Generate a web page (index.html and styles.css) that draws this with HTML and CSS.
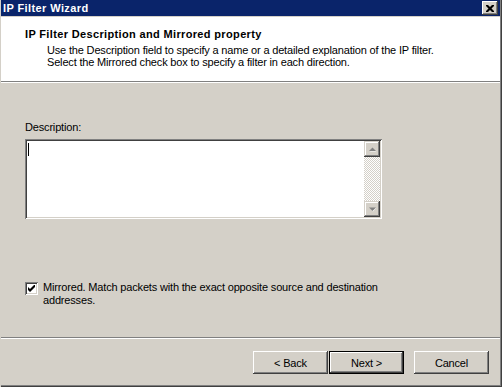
FILE: index.html
```html
<!DOCTYPE html>
<html>
<head>
<meta charset="utf-8">
<link rel="stylesheet" href="styles.css">
</head>
<body>
<div class="window">
  <div class="titlebar">
    <span class="title">IP Filter Wizard</span>
    <div class="close">
      <svg width="8" height="7" viewBox="0 0 8 7"><path d="M0 0h2l2 2 2-2h2v1L5.5 3.5 8 6v1H6L4 5 2 7H0V6l2.5-2.5L0 1z" fill="#000"/></svg>
    </div>
  </div>
  <div class="header">
    <div class="h-title">IP Filter Description and Mirrored property</div>
    <div class="h-desc">Use the Description field to specify a name or a detailed explanation of the IP filter.<br>Select the Mirrored check box to specify a filter in each direction.</div>
  </div>
  <div class="sep"></div>
  <div class="content">
    <div class="label">Description:</div>
    <div class="textarea">
      <div class="text-area-inner"><span class="caret"></span></div>
      <div class="vscroll">
        <div class="sbtn">
          <svg width="7" height="5" viewBox="0 0 7 5"><path d="M1 4.5h6L4 1.5z" fill="#fff"/><path d="M0 4h7L3.5 0.5z" fill="#808080"/></svg>
        </div>
        <div class="track"></div>
        <div class="sbtn">
          <svg width="7" height="5" viewBox="0 0 7 5"><path d="M1 1h6L4 4.5z" fill="#fff"/><path d="M0 0.5h7L3.5 4z" fill="#808080"/></svg>
        </div>
      </div>
    </div>
    <div class="check-row">
      <div class="checkbox">
        <svg width="7" height="7" viewBox="0 0 7 7"><path d="M0 2v3l2 2 5-5V-1L2 4z" fill="#000"/></svg>
      </div>
      <div class="check-label">Mirrored. Match packets with the exact opposite source and destination<br>addresses.</div>
    </div>
  </div>
  <div class="sep"></div>
  <div class="buttons">
    <div class="btn">&lt; Back</div>
    <div class="btn default">Next &gt;</div>
    <div class="btn cancel">Cancel</div>
  </div>
</div>
</body>
</html>
```

FILE: styles.css
```css
html, body {
  margin: 0;
  padding: 0;
  background: #d4d0c8;
}
body {
  font-family: "Liberation Sans", Arial, sans-serif;
  font-size: 11px;
  letter-spacing: -0.17px;
  color: #000;
}
.window {
  width: 502px;
  height: 387px;
  box-sizing: border-box;
  border-left: 1px solid #d4d0c8;
  box-shadow: inset -1px -1px #404040, inset -2px -2px #808080;
  padding-right: 2px;
  padding-bottom: 2px;
  display: flex;
  flex-direction: column;
}
.titlebar {
  height: 16px;
  background: #0a246a;
  display: flex;
  align-items: center;
  justify-content: space-between;
  border-bottom: 1px solid #d4d0c8;
}
.title {
  color: #fff;
  font-weight: bold;
  font-size: 11px;
  letter-spacing: 0.4px;
  padding-left: 2px;
  line-height: 14px;
}
.close {
  width: 16px;
  height: 14px;
  box-sizing: border-box;
  background: #d4d0c8;
  margin-right: 2px;
  box-shadow: inset -1px -1px #404040, inset 1px 1px #fff, inset -2px -2px #808080;
  display: flex;
  align-items: center;
  justify-content: center;
}
.header {
  background: #fff;
  height: 64px;
  box-sizing: border-box;
  padding: 11px 0 0 24px;
}
.h-title {
  font-weight: bold;
  letter-spacing: 0.35px;
  line-height: 13px;
}
.h-desc {
  padding-left: 22px;
  padding-top: 3px;
  line-height: 12px;
}
.sep {
  height: 1px;
  background: #808080;
  border-bottom: 1px solid #fff;
}
.content {
  flex: 1;
  padding: 38px 0 0 24px;
}
.label {
  line-height: 13px;
  margin-bottom: 5px;
}
.textarea {
  width: 357px;
  height: 80px;
  box-sizing: border-box;
  background: #fff;
  box-shadow: inset 1px 1px #808080, inset -1px -1px #fff, inset 2px 2px #404040, inset -2px -2px #d4d0c8;
  padding: 2px;
  display: flex;
}
.text-area-inner {
  flex: 1;
  position: relative;
}
.caret {
  position: absolute;
  left: 1px;
  top: 2px;
  width: 1px;
  height: 13px;
  background: #000;
}
.vscroll {
  width: 16px;
  display: flex;
  flex-direction: column;
}
.sbtn {
  height: 16px;
  box-sizing: border-box;
  background: #d4d0c8;
  box-shadow: inset -1px -1px #404040, inset 1px 1px #d4d0c8, inset -2px -2px #808080, inset 2px 2px #fff;
  display: flex;
  align-items: center;
  justify-content: center;
}
.track {
  flex: 1;
  background-color: #fff;
  background-image: repeating-conic-gradient(#d4d0c8 0 25%, #fff 0 50%);
  background-size: 2px 2px;
}
.check-row {
  display: flex;
  margin-top: 62px;
}
.checkbox {
  width: 13px;
  height: 13px;
  box-sizing: border-box;
  background: #fff;
  box-shadow: inset 1px 1px #808080, inset -1px -1px #fff, inset 2px 2px #404040, inset -2px -2px #d4d0c8;
  display: flex;
  align-items: center;
  justify-content: center;
  margin-top: 1px;
}
.check-label {
  padding-left: 5px;
  line-height: 13px;
}
.buttons {
  height: 46px;
  display: flex;
  justify-content: flex-end;
  align-items: flex-start;
  padding: 12px 11px 0 0;
  box-sizing: border-box;
}
.btn {
  width: 75px;
  height: 23px;
  box-sizing: border-box;
  background: #d4d0c8;
  box-shadow: inset -1px -1px #404040, inset 1px 1px #fff, inset -2px -2px #808080, inset 2px 2px #d4d0c8;
  display: flex;
  align-items: center;
  justify-content: center;
}
.btn.default {
  border: 1px solid #000;
  margin-left: 1px;
}
.btn.cancel {
  margin-left: 10px;
}
```
